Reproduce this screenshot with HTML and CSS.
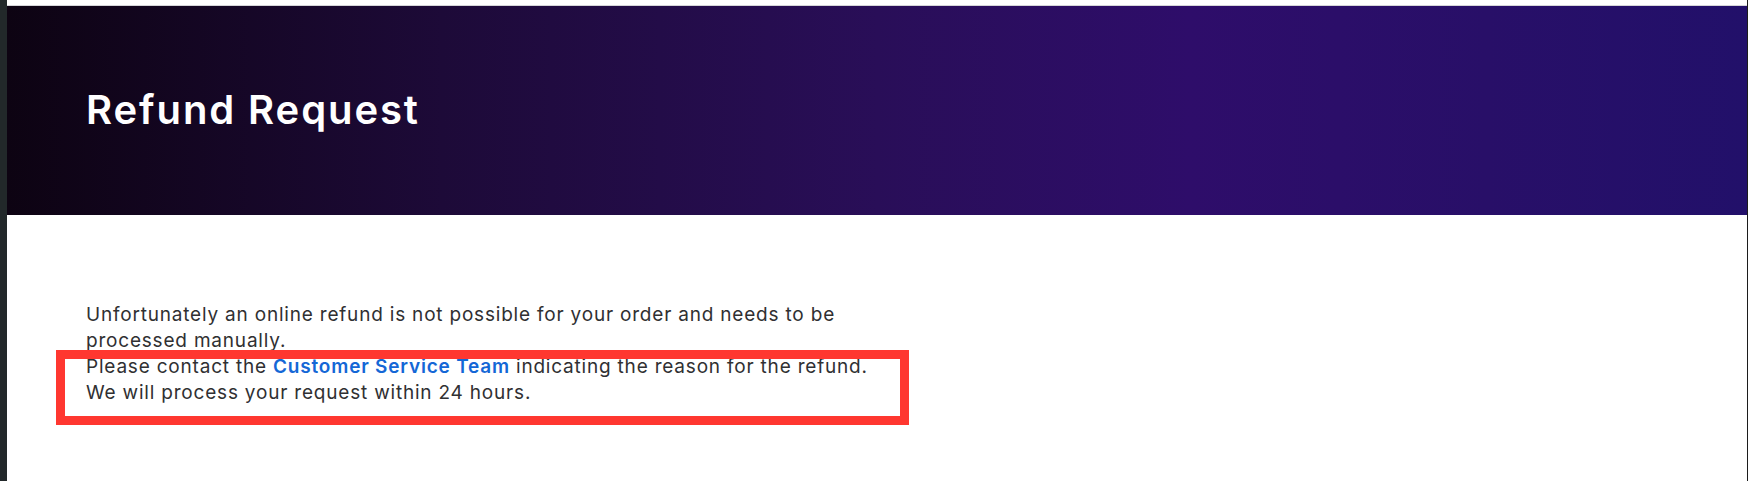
FILE: index.html
```html
<!DOCTYPE html>
<html lang="en">
<head>
<meta charset="utf-8">
<title>Refund Request</title>
<link rel="stylesheet" href="styles.css">
</head>
<body>
<div class="frame">
  <div class="topbar"></div>
  <header class="hero">
    <h1 class="hero-title">Refund Request</h1>
  </header>
  <main class="content">
    <p class="message">Unfortunately an online refund is not possible for your order and needs to be processed manually.<br>Please contact the <a class="link" href="#">Customer Service Team</a> indicating the reason for the refund.<br>We will process your request within 24 hours.</p>
    <div class="highlight"></div>
  </main>
</div>
</body>
</html>
```

FILE: styles.css
```css
html, body {
  margin: 0;
  padding: 0;
  background: #ffffff;
}

.frame {
  box-sizing: border-box;
  width: 1748px;
  height: 481px;
  border-left: 7px solid #22282a;
  border-right: 1px solid #1c1c1c;
  background: #ffffff;
  overflow: hidden;
  font-family: Inter, "Liberation Sans", sans-serif;
}

.topbar {
  height: 5px;
  background: #ffffff;
  border-bottom: 1px solid #d6d6d9;
}

.hero {
  box-sizing: border-box;
  height: 209px;
  padding: 80px 0 0 79px;
  background: linear-gradient(90deg, #0d0312 0%, #1d0a38 25%, #290e58 50%, #2e0d6a 68%, #280f68 85%, #22106a 100%);
}

.hero-title {
  margin: 0;
  font-size: 40px;
  line-height: 48px;
  font-weight: 600;
  color: #ffffff;
  letter-spacing: 1.9px;
}

.content {
  position: relative;
  padding: 87px 0 0 79px;
}

.message {
  margin: 0;
  max-width: 820px;
  font-size: 19px;
  line-height: 26px;
  letter-spacing: 0.8px;
  color: #303032;
}

.link {
  color: #1467d6;
  font-weight: 600;
  text-decoration: none;
}

.highlight {
  position: absolute;
  left: 49px;
  top: 135px;
  width: 853px;
  height: 75px;
  box-sizing: border-box;
  border: 9px solid #ff3730;
}
```
